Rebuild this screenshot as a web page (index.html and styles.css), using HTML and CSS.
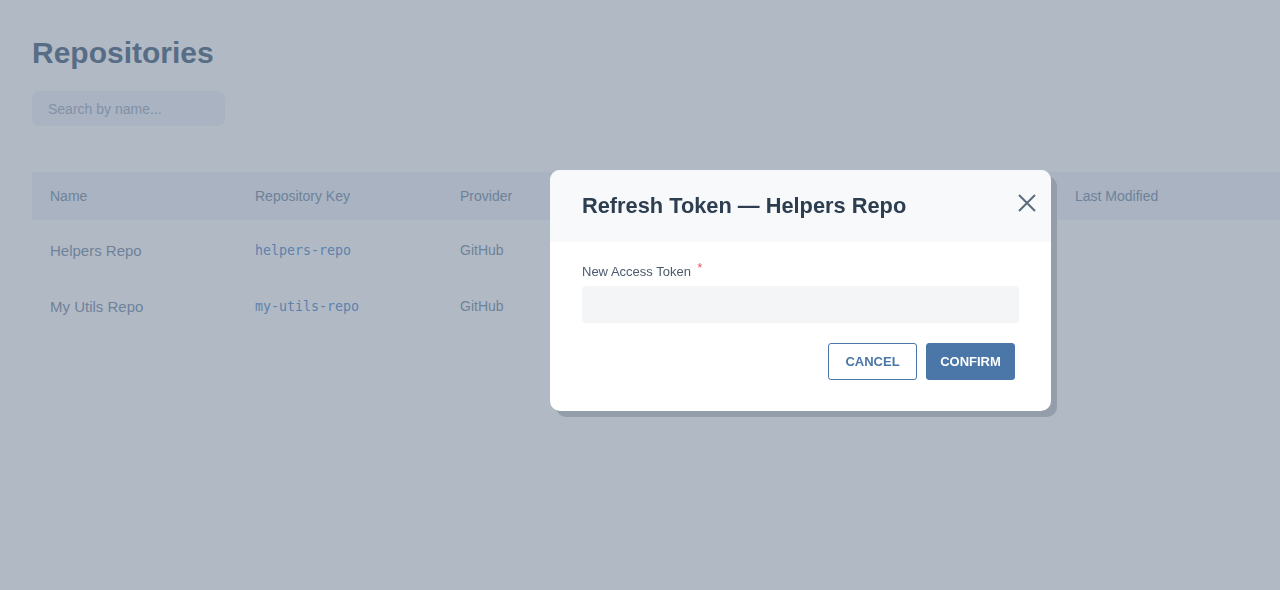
FILE: index.html
```html
<!DOCTYPE html>
<html lang="en">
<head>
    <meta charset="UTF-8">
    <meta name="viewport" content="width=device-width, initial-scale=1.0">
    <title>Repositories</title>
    <link rel="stylesheet" href="styles.css">
</head>
<body>
    <main class="page">
        <h1>Repositories</h1>
        <input class="search" type="text" placeholder="Search by name...">

        <table class="repo-table">
            <thead>
                <tr>
                    <th>Name</th>
                    <th>Repository Key</th>
                    <th>Provider</th>
                    <th></th>
                    <th></th>
                    <th class="last">Last Modified</th>
                </tr>
            </thead>
            <tbody>
                <tr>
                    <td>Helpers Repo</td>
                    <td class="key">helpers-repo</td>
                    <td class="small">GitHub</td>
                    <td></td>
                    <td></td>
                    <td></td>
                </tr>
                <tr>
                    <td>My Utils Repo</td>
                    <td class="key">my-utils-repo</td>
                    <td class="small">GitHub</td>
                    <td></td>
                    <td></td>
                    <td></td>
                </tr>
            </tbody>
        </table>
    </main>

    <div class="backdrop"></div>

    <div class="modal">
        <div class="modal-header">
            <h2>Refresh Token — Helpers Repo</h2>
            <button class="close" type="button" aria-label="Close">
                <svg width="18" height="18" viewBox="0 0 18 18">
                    <path d="M1 1 L17 17 M17 1 L1 17" stroke="#5b6b7c" stroke-width="2" fill="none"/>
                </svg>
            </button>
        </div>
        <form class="modal-body">
            <label for="token">New Access Token <span class="req">*</span></label>
            <input type="text" id="token" name="token">
            <div class="actions">
                <button type="button" class="btn btn-outline">Cancel</button>
                <button type="submit" class="btn btn-primary">Confirm</button>
            </div>
        </form>
    </div>
</body>
</html>
```

FILE: styles.css
```css
html, body { margin: 0; height: 100%; overflow: hidden; }
body { font-family: "Liberation Sans", Arial, sans-serif; background: #fff; color: #334155; }
.page { padding: 36px 0 0 32px; }
h1 { margin: 0 0 21px; font-size: 30px; font-weight: bold; color: #4a6680; line-height: 34px; }
.search { display: block; width: 193px; height: 35px; box-sizing: border-box; padding: 0 16px; border: none; border-radius: 7px; background: #eff2f6; font-family: inherit; font-size: 14px; }
.search::placeholder { color: #9cafc2; }

.repo-table { margin-top: 46px; border-collapse: collapse; width: 1260px; table-layout: fixed; }
.repo-table th { height: 48px; padding: 0 18px; text-align: left; font-weight: normal; font-size: 14px; color: #7790a8; background: #eef3f7; }
.repo-table td { height: 52px; padding: 4px 18px 0; font-size: 15px; color: #7890a6; }
.repo-table th { width: 169px; }
.repo-table th.last { width: auto; }
.repo-table td.small { font-size: 14px; }
.repo-table td.key { font-family: "DejaVu Sans Mono", monospace; font-size: 13.3px; color: #5590cc; }

.backdrop { position: fixed; inset: 0; background: rgba(100, 116, 139, 0.5); }

.modal { position: absolute; left: 550px; top: 170px; width: 501px; background: #fff; border-radius: 10px; box-shadow: 6px 6px 0 #949eab; overflow: hidden; }
.modal-header { height: 72px; display: flex; align-items: center; justify-content: space-between; padding: 0 12px 0 32px; background: #f8f9fb; }
.modal-header h2 { margin: 0; font-size: 21.8px; font-weight: bold; color: #2c3e50; }
.close { width: 24px; height: 24px; padding: 0; border: none; background: none; display: flex; align-items: center; justify-content: center; margin-top: -6px; }
.modal-body { padding: 22px 32px 31px; }
.modal-body label { display: block; font-size: 13px; color: #4a5b6d; margin-bottom: 7px; }
.req { color: #e05252; font-size: 12px; margin-left: 3px; position: relative; top: -4px; }
.modal-body input { display: block; width: 100%; height: 37px; box-sizing: border-box; border: none; border-radius: 4px; background: #f3f5f7; }
.actions { display: flex; justify-content: flex-end; gap: 9px; margin-top: 20px; padding-right: 4px; }
.btn { width: 89px; height: 37px; box-sizing: border-box; border-radius: 3px; font-family: inherit; font-size: 13px; font-weight: bold; text-transform: uppercase; cursor: pointer; }
.btn-outline { background: #fff; border: 1px solid #4a76a8; color: #4a76a8; }
.btn-primary { background: #4a76a8; border: 1px solid #4a76a8; color: #fff; }
```
